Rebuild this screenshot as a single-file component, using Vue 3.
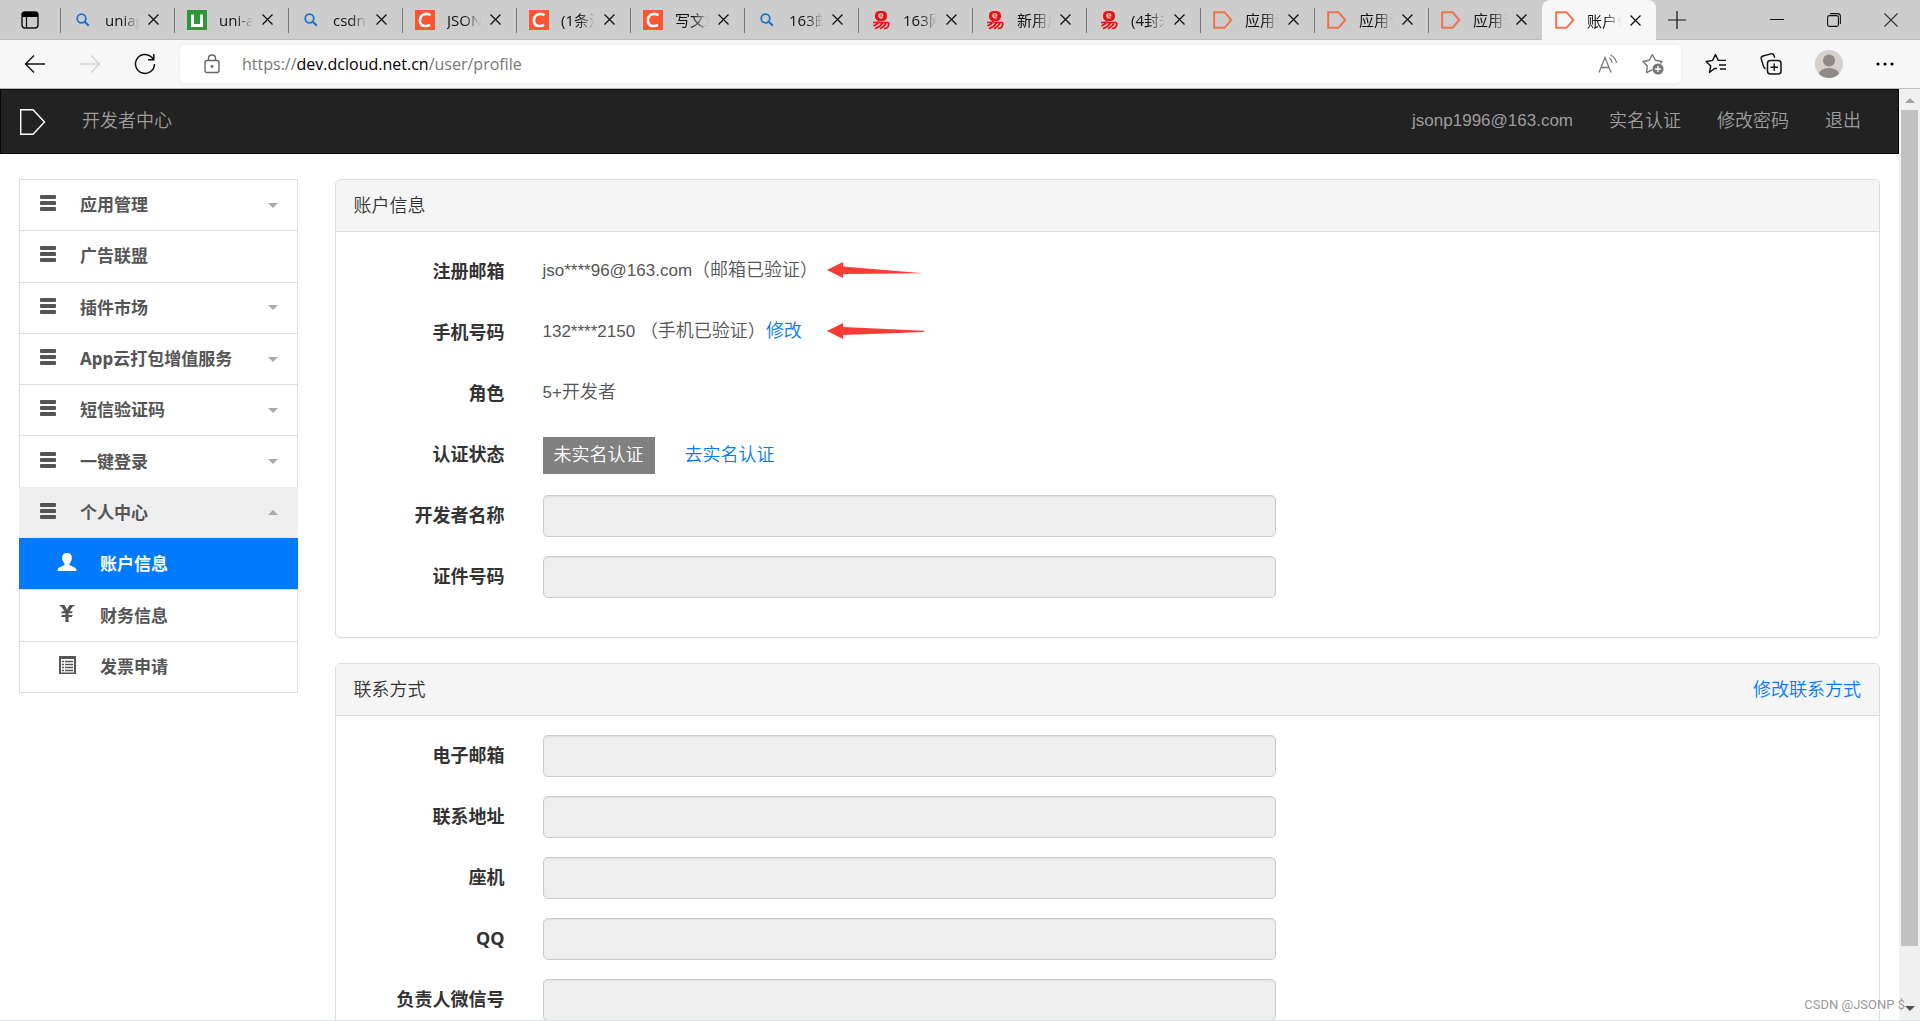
<script setup>
import { ref } from 'vue'

const tabs = [
  { icon: 'search', title: 'uniapp' },
  { icon: 'uni', title: 'uni-app' },
  { icon: 'search', title: 'csdn登' },
  { icon: 'csdn', title: 'JSONP' },
  { icon: 'csdn', title: '(1条消' },
  { icon: 'csdn', title: '写文章' },
  { icon: 'search', title: '163邮' },
  { icon: 'netease', title: '163网' },
  { icon: 'netease', title: '新用户' },
  { icon: 'netease', title: '(4封未' },
  { icon: 'dcloud', title: '应用详' },
  { icon: 'dcloud', title: '应用详' },
  { icon: 'dcloud', title: '应用详' },
  { icon: 'dcloud', title: '账户信', active: true },
]

const menu = [
  { label: '应用管理', caret: 'down' },
  { label: '广告联盟' },
  { label: '插件市场', caret: 'down' },
  { label: 'App云打包增值服务', caret: 'down' },
  { label: '短信验证码', caret: 'down' },
  { label: '一键登录', caret: 'down' },
  { label: '个人中心', caret: 'up', open: true },
]

const subMenu = [
  { label: '账户信息', icon: 'user', active: true },
  { label: '财务信息', icon: 'yen' },
  { label: '发票申请', icon: 'list' },
]

const contactFields = ref([
  { id: 'email', label: '电子邮箱', value: '' },
  { id: 'address', label: '联系地址', value: '' },
  { id: 'phone', label: '座机', value: '' },
  { id: 'qq', label: 'QQ', value: '' },
  { id: 'wechat', label: '负责人微信号', value: '' },
])
</script>

<template>
  <div class="window">
    <header class="tabbar">
      <button class="tab-actions" aria-label="标签操作">
        <svg width="18" height="18" viewBox="0 0 18 18"><rect x="1" y="1" width="16" height="16" rx="3" fill="none" stroke="#111" stroke-width="1.4" /><path d="M1 6V3.5Q1 1 3.500 1H14.500Q17 1 17 3.500V6Z" fill="#000" /><path d="M5.500 6V17" stroke="#111" stroke-width="1.200" /></svg>
      </button>
      <div v-for="(tab, i) in tabs" :key="i" class="tab" :class="{ active: tab.active }">
        <span class="tab-icon">
          <svg v-if="tab.icon === 'search'" width="14" height="14" viewBox="0 0 14 14"><circle cx="5.500" cy="5.500" r="4.300" fill="none" stroke="#1b74cf" stroke-width="1.800" /><path d="M8.700 8.700L12.800 12.800" stroke="#1b74cf" stroke-width="2.200" /></svg>
          <svg v-else-if="tab.icon === 'uni'" width="20" height="20" viewBox="0 0 20 20"><rect width="20" height="20" fill="#2b9939" /><path d="M5.500 4.500V15.500H14.500V4.500" fill="none" stroke="#fff" stroke-width="3" /></svg>
          <svg v-else-if="tab.icon === 'csdn'" width="20" height="20" viewBox="0 0 20 20"><rect width="20" height="20" fill="#fc5531" /><path d="M15.500 5.300C12.500 3 5.500 3.200 4.900 10C4.500 16.500 11 17 15 14.800" fill="none" stroke="#fff" stroke-width="2.600" /></svg>
          <svg v-else-if="tab.icon === 'netease'" width="18" height="20" viewBox="0 0 18 20"><rect x="3" y="1" width="12" height="10" rx="4.500" fill="#f00d0d" /><path d="M6.800 6H10.800Q11 3.600 8.900 3.600Q6.800 3.800 6.800 6Q7 8.300 10.800 7.900" fill="none" stroke="#e6d0d0" stroke-width="1.200" /><path d="M1 12.500H5.500L7 11M7 12.500H15.500Q17 12.500 16.700 14.500Q16 19 12 18.300M6.500 13L1.500 16M10.500 13Q8 17 3 18.500M14 13.500Q12 16.500 8 18.800" fill="none" stroke="#f00d0d" stroke-width="1.700" /></svg>
          <svg v-else width="20" height="18" viewBox="0 0 20 18"><path d="M1.200 1.200H11.500L18.300 9L11.500 16.800H1.200Z" fill="none" stroke="#f2724a" stroke-width="2" /></svg>
        </span>
        <span class="tab-title">{{ tab.title }}</span>
        <button class="tab-close" aria-label="关闭标签"><svg width="11" height="11" viewBox="0 0 11 11"><path d="M.5 .5L10.500 10.500M10.500 .5L.5 10.500" stroke="#111" stroke-width="1.300" /></svg></button>
      </div>
      <button class="new-tab" aria-label="新建标签"><svg width="18" height="18" viewBox="0 0 18 18"><path d="M9 0V18M0 9H18" stroke="#111" stroke-width="1.200" /></svg></button>
      <div class="window-controls">
        <button aria-label="最小化"><svg width="14" height="14" viewBox="0 0 14 14"><path d="M0 6.500H14" stroke="#111" /></svg></button>
        <button aria-label="还原"><svg width="14" height="14" viewBox="0 0 14 14"><rect x=".6" y="2.600" width="10.800" height="10.800" rx="1.800" fill="none" stroke="#111" stroke-width="1.100" /><path d="M3 .6H10.500Q13.400 .6 13.400 3.500V11" fill="none" stroke="#111" stroke-width="1.100" /></svg></button>
        <button aria-label="关闭"><svg width="14" height="14" viewBox="0 0 14 14"><path d="M.5 .5L13.500 13.500M13.500 .5L.5 13.500" stroke="#333" stroke-width="1.100" /></svg></button>
      </div>
    </header>

    <div class="toolbar">
      <div class="nav-buttons">
        <button aria-label="后退"><svg width="22" height="20" viewBox="0 0 22 20"><path d="M21 10H1.500M10 1.500L1.500 10L10 18.500" fill="none" stroke="#111" stroke-width="1.400" /></svg></button>
        <button aria-label="前进" disabled><svg width="22" height="20" viewBox="0 0 22 20"><path d="M1 10H20.500M12 1.500L20.500 10L12 18.500" fill="none" stroke="#d4d4d4" stroke-width="1.400" /></svg></button>
        <button aria-label="刷新"><svg width="22" height="22" viewBox="0 0 22 22"><path d="M20.500 11A9.500 9.500 0 1 1 17.800 4.300L19.500 6.500M19.800 1V6.800H14" fill="none" stroke="#111" stroke-width="1.500" /></svg></button>
      </div>
      <div class="address">
        <svg class="lock" width="16" height="20" viewBox="0 0 16 20"><rect x="1" y="6.500" width="14" height="12" rx="2" fill="none" stroke="#666" stroke-width="1.400" /><path d="M4.500 6.500V4.500Q4.500 1 8 1T11.500 4.500V6.500" fill="none" stroke="#666" stroke-width="1.400" /><circle cx="8" cy="12.500" r="1.400" fill="#666" /></svg>
        <div class="url" role="textbox" aria-label="地址" contenteditable="true">https://<span class="host">dev.dcloud.net.cn</span>/user/profile</div>
        <button aria-label="大声朗读"><svg width="20" height="20" viewBox="0 0 20 20"><path d="M1 18.500L7 3.500L13 18.500M3.200 13.500H10.800M11.500 4Q14 6 14 9M12.500 1Q18 4 18.500 9" fill="none" stroke="#777" stroke-width="1.300" /></svg></button>
        <button aria-label="添加到收藏夹"><svg width="22" height="22" viewBox="0 0 22 22"><path d="M10 17L4.500 19.500L5.300 13L1 8.500L7.300 7.300L10.300 1.500L13.300 7.300L20 8.500L18.500 10.500" fill="none" stroke="#777" stroke-width="1.400" stroke-linejoin="round" /><circle cx="16" cy="16" r="5.600" fill="#777" /><path d="M16 13V19M13 16H19" stroke="#fff" stroke-width="1.300" /></svg></button>
      </div>
      <div class="toolbar-actions">
        <button aria-label="收藏夹"><svg width="22" height="22" viewBox="0 0 22 22"><path d="M12 15.500L9.500 15.500L4.500 19.500L5.700 13L1.200 8.500L7.600 7.400L10.500 1.500L13.300 7.400H21M14 12H21M15 16H21" fill="none" stroke="#111" stroke-width="1.400" stroke-linejoin="round" /></svg></button>
        <button aria-label="集锦"><svg width="22" height="22" viewBox="0 0 22 22"><rect x="7.500" y="7.500" width="13.500" height="13.500" rx="3" fill="none" stroke="#111" stroke-width="1.500" /><path d="M14.200 10.500V18M10.500 14.200H18M5.500 15.800Q4 15 3.600 13.500L1.200 6Q.6 3.800 3 3L11 .9Q13.500 .4 14.200 3L14.700 4.800" fill="none" stroke="#111" stroke-width="1.400" /></svg></button>
        <button aria-label="个人资料"><svg width="28" height="28" viewBox="0 0 28 28"><clipPath id="avatar"><circle cx="14" cy="14" r="14" /></clipPath><g clip-path="url(#avatar)"><rect width="28" height="28" fill="#d4d1cd" /><circle cx="14" cy="10.500" r="6" fill="#8f8a87" /><ellipse cx="14" cy="25" rx="10.500" ry="7" fill="#8f8a87" /></g></svg></button>
        <button aria-label="设置及其他"><svg width="18" height="18" viewBox="0 0 18 18"><circle cx="2" cy="9" r="1.600" /><circle cx="9" cy="9" r="1.600" /><circle cx="16" cy="9" r="1.600" /></svg></button>
      </div>
    </div>

    <div class="viewport">
      <div class="page">
        <nav class="navbar">
          <a href="#" class="brand" aria-label="DCloud"><svg width="26" height="26" viewBox="0 0 26 26"><path d="M.7 .7H13L24.500 13L13 25.300H.7Z" fill="none" stroke="#fff" stroke-width="1.400" /></svg></a>
          <a href="#">开发者中心</a>
          <a href="#" class="account">jsonp1996@163.com</a>
          <a href="#">实名认证</a>
          <a href="#">修改密码</a>
          <a href="#">退出</a>
        </nav>

        <div class="columns">
          <aside class="sidebar">
            <ul class="menu">
              <li v-for="item in menu" :key="item.label" :class="{ open: item.open }">
                <button class="menu-item">
                  <svg class="bars" width="16" height="16" viewBox="0 0 16 16"><path d="M1 0H15Q16 0 16 1V3Q16 4 15 4H1Q0 4 0 3V1Q0 0 1 0ZM1 6H15Q16 6 16 7V9Q16 10 15 10H1Q0 10 0 9V7Q0 6 1 6ZM1 12H15Q16 12 16 13V15Q16 16 15 16H1Q0 16 0 15V13Q0 12 1 12Z" fill="#555" /></svg>
                  <span class="menu-label">{{ item.label }}</span>
                  <span v-if="item.caret" class="caret" :class="item.caret"></span>
                </button>
              </li>
              <li v-for="item in subMenu" :key="item.label" :class="{ active: item.active }">
                <a href="#" class="menu-item sub">
                  <svg v-if="item.icon === 'user'" width="20" height="18" viewBox="0 0 20 18"><path d="M10 0C13.500 0 15 2.200 14.800 5.200C14.700 7.500 13.700 9.300 12.500 10.500V12L18.200 14.800Q19.500 15.500 19.500 18H.5Q.5 15.500 1.800 14.800L7.500 12V10.500C6.300 9.300 5.300 7.500 5.200 5.200C5 2.200 6.500 0 10 0Z" fill="#fff" /></svg>
                  <svg v-else-if="item.icon === 'yen'" width="20" height="18" viewBox="0 0 20 18"><path d="M2.500 0H7.500L10 4.500L12.500 0H17.500V1.200H16L12.500 6.200H15.800L14.800 8.200H11.500V10H15.800L14.800 12H11.500V16L12.500 17H7.500L8.500 16V12H4L5 10H8.500V8.200H4L5 6.200H7.500L4 1.200H2.500Z" fill="#555" /></svg>
                  <svg v-else width="20" height="18" viewBox="0 0 20 18"><path d="M2 0H19V18H2ZM4 3V16.500H17V3Z" fill="#555" fill-rule="evenodd" /><path d="M5 5.500H7M5 8.500H7M5 11.500H7M5 14.500H7M8 5.500H16M8 8.500H16M8 11.500H16M8 14.500H16" stroke="#555" stroke-width="1.600" /></svg>
                  <span class="menu-label">{{ item.label }}</span>
                </a>
              </li>
            </ul>
          </aside>

          <main class="content">
            <section class="panel">
              <header class="panel-head"><h2>账户信息</h2></header>
              <div class="panel-body">
                <div class="row">
                  <span class="label">注册邮箱</span>
                  <div class="value">jso****96@163.com<span class="cjk">（邮箱已验证）</span>
                    <svg class="arrow first" width="97" height="16" viewBox="0 0 97 16"><path d="M0 8L16 0V4.500L96 11.300L16 12V16Z" fill="#fc3a36" /></svg>
                  </div>
                </div>
                <div class="row">
                  <span class="label">手机号码</span>
                  <div class="value">132****2150 <span class="cjk">（手机已验证）<a href="#">修改</a></span>
                    <svg class="arrow second" width="97" height="16" viewBox="0 0 97 16"><path d="M0 8L16 0V4L97 7.800V9L16 12V16Z" fill="#fc3a36" /></svg>
                  </div>
                </div>
                <div class="row">
                  <span class="label">角色</span>
                  <div class="value">5+<span class="cjk">开发者</span></div>
                </div>
                <div class="row">
                  <span class="label">认证状态</span>
                  <div class="value status cjk"><span class="badge">未实名认证</span><a href="#">去实名认证</a></div>
                </div>
                <div class="row">
                  <label class="label" for="devname">开发者名称</label>
                  <div class="field"><input id="devname" type="text" disabled /></div>
                </div>
                <div class="row">
                  <label class="label" for="idno">证件号码</label>
                  <div class="field"><input id="idno" type="text" disabled /></div>
                </div>
              </div>
            </section>

            <section class="panel">
              <header class="panel-head"><h2>联系方式</h2><a href="#">修改联系方式</a></header>
              <div class="panel-body">
                <div v-for="f in contactFields" :key="f.id" class="row">
                  <label class="label" :for="f.id">{{ f.label }}</label>
                  <div class="field"><input :id="f.id" v-model="f.value" type="text" disabled /></div>
                </div>
              </div>
            </section>
          </main>
        </div>
      </div>

      <div class="scrollbar" aria-hidden="true">
        <span class="scroll-up"></span>
        <span class="thumb"></span>
        <span class="track"></span>
        <span class="scroll-down"></span>
      </div>
    </div>
    <div class="watermark">CSDN @JSONP $</div>
  </div>
</template>

<style>
body {
  margin: 0;
  overflow: hidden;
}
</style>

<style scoped>
* {
  box-sizing: border-box;
}
.window {
  position: relative;
  display: flex;
  flex-direction: column;
  height: 100vh;
  background: #fff;
  border-bottom: 1px solid #d5e3ef;
  font-family: "Liberation Sans", "Noto Sans CJK SC", sans-serif;
  font-size: 17px;
  font-weight: 350;
  color: #333;
  overflow: hidden;
}
button {
  display: flex;
  align-items: center;
  justify-content: center;
  padding: 0;
  border: 0;
  background: none;
  font: inherit;
  color: inherit;
}
svg {
  display: block;
  flex: none;
}
a {
  color: #007aff;
  text-decoration: none;
}

/* Browser tabs */
.tabbar {
  display: flex;
  flex: none;
  height: 40px;
  background: #cdcdcd;
  border-bottom: 1px solid #bdbdbd;
  font-family: "Open Sans", "Noto Sans CJK SC", sans-serif;
  font-size: 15px;
  font-weight: 400;
  color: #111;
}
.tab-actions {
  width: 60px;
}
.tab {
  display: flex;
  align-items: center;
  flex: 0 1 114px;
  min-width: 0;
  padding-left: 12px;
  background: linear-gradient(#777, #777) 0 8px / 1px 25px no-repeat;
}
.tab.active {
  height: 40px;
  background: #f7f7f7;
  border-radius: 8px 8px 0 0;
}
.tab-icon {
  display: flex;
  justify-content: center;
  width: 22px;
}
.tab-title {
  width: 34px;
  margin-left: 11px;
  overflow: hidden;
  white-space: nowrap;
  mask-image: linear-gradient(90deg, #000 50%, transparent);
}
.tab-close {
  margin-left: 9px;
}
.new-tab {
  width: 42px;
}
.window-controls {
  display: flex;
  margin-left: auto;
  padding-right: 1px;
}
.window-controls button {
  width: 57px;
}

/* Browser toolbar */
.toolbar {
  display: flex;
  align-items: center;
  flex: none;
  height: 49px;
  background: #f7f7f7;
  border-bottom: 1px solid #bbb;
}
.nav-buttons {
  display: flex;
  width: 180px;
  padding-left: 24px;
  gap: 33px;
}
.address {
  display: flex;
  align-items: center;
  flex: 1;
  height: 38px;
  padding: 0 17px 0 24px;
  background: #fff;
  border-radius: 5px;
  box-shadow: 0 0 3px #e2e2e2;
  font-family: "Open Sans", "Noto Sans", sans-serif;
  font-size: 16px;
  font-weight: 400;
  color: #777;
}
.address button {
  margin-left: 24px;
}
.url {
  flex: 1;
  margin-left: 22px;
  outline: none;
}
.host {
  color: #000;
}
.toolbar-actions {
  display: flex;
  align-items: center;
  gap: 33px;
  padding: 0 26px 0 24px;
}

/* Page */
.viewport {
  display: flex;
  flex: 1;
  min-height: 0;
}
.page {
  flex: 1;
  min-width: 0;
  overflow: hidden;
}
.navbar {
  display: flex;
  align-items: center;
  gap: 36px;
  height: 65px;
  padding: 0 37px 0 19px;
  background: #222;
  border: 1px solid #080808;
}
.navbar a {
  font-size: 18px;
  line-height: 24px;
  color: #9d9d9d;
}
.navbar a:not(.brand) {
  padding-bottom: 2px;
}
.navbar .account {
  margin-left: auto;
  font-size: 17px;
}
.columns {
  display: grid;
  grid-template-columns: 1fr 5fr;
  padding-top: 25px;
}
.sidebar,
.content {
  min-width: 0;
  padding: 0 19px;
}
.content {
  padding-left: 18px;
}
.menu {
  display: grid;
  grid-auto-rows: 1fr;
  min-height: 514px;
  margin: 0;
  padding: 0;
  border: 1px solid #ddd;
  border-top: 0;
  list-style: none;
}
.menu li {
  display: flex;
  border-top: 1px solid #ddd;
}
.menu .open {
  margin: 0 -1px;
  padding: 0 1px;
  background: #eee;
  border-color: #eee;
}
.menu .active {
  margin: 0 -1px;
  padding: 0 1px;
  background: #007aff;
  border-color: #007aff;
}
.menu-item {
  display: flex;
  align-items: center;
  justify-content: flex-start;
  width: 100%;
  padding: 0 19px 0 20px;
  font-family: "Noto Sans", "Noto Sans CJK SC", sans-serif;
  font-size: 17px;
  font-weight: 700;
  line-height: 24px;
  color: #555;
}
.menu-item svg {
  margin-bottom: 4px;
}
.menu-label {
  margin-left: 24px;
  white-space: nowrap;
}
.sub {
  padding-left: 37px;
}
.sub .menu-label {
  margin-left: 23px;
}
.active .menu-item {
  color: #fff;
}
.caret {
  margin-left: auto;
  border: 5px solid transparent;
}
.caret.down {
  border-top-color: #aaa;
  border-bottom: 0;
}
.caret.up {
  border-bottom-color: #aaa;
  border-top: 0;
}

/* Panels */
.panel {
  margin-bottom: 25px;
  border: 1px solid #ddd;
  border-radius: 5px;
  box-shadow: 0 1px 1px #f2f2f2;
}
.panel-head {
  display: flex;
  align-items: center;
  justify-content: space-between;
  height: 52px;
  padding: 0 18px 4px;
  background: #f5f5f5;
  border-bottom: 1px solid #ddd;
  border-radius: 4px 4px 0 0;
  font-size: 18px;
}
.panel-head h2 {
  margin: 0;
  font: inherit;
}
.panel-body {
  display: grid;
  gap: 19px;
  padding: 19px 0 39px;
}
.row {
  display: grid;
  grid-template-columns: 188px 50%;
  align-items: center;
  min-height: 42px;
}
.label {
  padding: 0 19px 2px 0;
  font-family: "Noto Sans", "Noto Sans CJK SC", sans-serif;
  font-size: 18px;
  font-weight: 700;
  line-height: 24px;
  text-align: right;
}
.value {
  position: relative;
  padding: 0 19px 4px;
  line-height: 24px;
  color: #555;
}
.cjk {
  font-size: 18px;
}
.status {
  display: flex;
  align-items: center;
  gap: 30px;
  padding-bottom: 0;
}
.badge {
  padding: 6px 11px 7px;
  background: #808080;
  color: #fff;
}
.field {
  padding: 0 19px;
}
.field input {
  display: block;
  width: 100%;
  height: 42px;
  padding: 6px 15px;
  background: #eee;
  border: 1px solid #ccc;
  border-radius: 5px;
  box-shadow: inset 0 1px 1px #e0e0e0;
  font-size: 17px;
}
/* Marker arrows drawn over the form */
.arrow {
  position: absolute;
  left: 303px;
  top: 4px;
}

/* Scrollbar */
.scrollbar {
  display: flex;
  flex-direction: column;
  align-items: center;
  width: 21px;
  padding: 9px 0;
  background: #f0f0f0;
}
.scroll-up,
.scroll-down {
  border: 5px solid transparent;
}
.scroll-up {
  margin-bottom: 7px;
  border-top: 0;
  border-bottom-color: #a3a3a3;
}
.thumb {
  flex: 14;
  width: 17px;
  background: #c1c1c1;
}
.track {
  flex: 1;
}
.scroll-down {
  border-bottom: 0;
  border-top-color: #505050;
}
.watermark {
  position: absolute;
  right: 15px;
  bottom: 6px;
  font-family: Roboto, sans-serif;
  font-size: 13px;
  font-weight: 400;
  line-height: 18px;
  color: #999;
  text-shadow: 1px 1px 1px #fff;
}
</style>
